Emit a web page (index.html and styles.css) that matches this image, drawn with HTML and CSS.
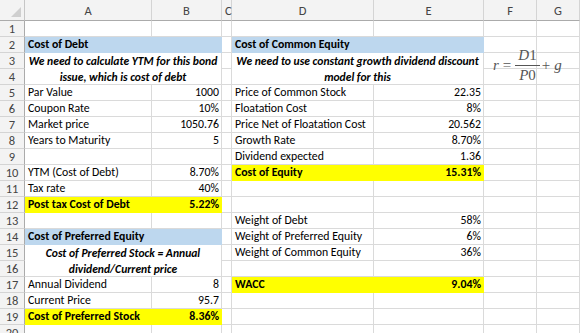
FILE: index.html
```html
<!DOCTYPE html>
<html>
<head>
<meta charset="utf-8">
<link rel="stylesheet" href="styles.css">
</head>
<body>
<div class="sheet">
  <div class="c corner"><svg width="24" height="20" viewBox="0 0 24 20"><polygon points="11,17 21,17 21,7" fill="#cfcfcf"/></svg></div>
  <div class="c hd">A</div><div class="c hd">B</div><div class="c hd">C</div><div class="c hd">D</div><div class="c hd">E</div><div class="c hd">F</div><div class="c hd">G</div>

  <div class="c rh">1</div><div class="c"></div><div class="c"></div><div class="c"></div><div class="c"></div><div class="c"></div><div class="c"></div><div class="c"></div>

  <div class="c rh">2</div><div class="c blue">Cost of Debt</div><div class="c"></div><div class="c blue">Cost of Common Equity</div><div class="c"></div><div class="c"></div>

  <div class="c rh">3</div><div class="c note">We need to calculate YTM for this bond<br>issue, which is cost of debt</div><div class="c"></div><div class="c note">We need to use constant growth dividend discount<br>model for this</div><div class="c"></div><div class="c"></div>
  <div class="c rh">4</div><div class="c"></div><div class="c"></div><div class="c"></div>

  <div class="c rh">5</div><div class="c">Par Value</div><div class="c num">1000</div><div class="c"></div><div class="c">Price of Common Stock</div><div class="c num">22.35</div><div class="c"></div><div class="c"></div>
  <div class="c rh">6</div><div class="c">Coupon Rate</div><div class="c num">10%</div><div class="c"></div><div class="c">Floatation Cost</div><div class="c num">8%</div><div class="c"></div><div class="c"></div>
  <div class="c rh">7</div><div class="c">Market price</div><div class="c num">1050.76</div><div class="c"></div><div class="c">Price Net of Floatation Cost</div><div class="c num">20.562</div><div class="c"></div><div class="c"></div>
  <div class="c rh">8</div><div class="c">Years to Maturity</div><div class="c num">5</div><div class="c"></div><div class="c">Growth Rate</div><div class="c num">8.70%</div><div class="c"></div><div class="c"></div>
  <div class="c rh">9</div><div class="c"></div><div class="c"></div><div class="c"></div><div class="c">Dividend expected</div><div class="c num">1.36</div><div class="c"></div><div class="c"></div>
  <div class="c rh">10</div><div class="c">YTM (Cost of Debt)</div><div class="c num">8.70%</div><div class="c"></div><div class="c yellow"><span>Cost of Equity</span><span>15.31%</span></div><div class="c"></div><div class="c"></div>
  <div class="c rh">11</div><div class="c">Tax rate</div><div class="c num">40%</div><div class="c"></div><div class="c"></div><div class="c"></div><div class="c"></div><div class="c"></div>
  <div class="c rh">12</div><div class="c yellow"><span>Post tax Cost of Debt</span><span>5.22%</span></div><div class="c"></div><div class="c"></div><div class="c"></div><div class="c"></div><div class="c"></div>
  <div class="c rh">13</div><div class="c"></div><div class="c"></div><div class="c"></div><div class="c">Weight of Debt</div><div class="c num">58%</div><div class="c"></div><div class="c"></div>
  <div class="c rh">14</div><div class="c blue">Cost of Preferred Equity</div><div class="c"></div><div class="c">Weight of Preferred Equity</div><div class="c num">6%</div><div class="c"></div><div class="c"></div>
  <div class="c rh">15</div><div class="c note">Cost of Preferred Stock = Annual<br>dividend/Current price</div><div class="c"></div><div class="c">Weight of Common Equity</div><div class="c num">36%</div><div class="c"></div><div class="c"></div>
  <div class="c rh">16</div><div class="c"></div><div class="c"></div><div class="c"></div><div class="c"></div><div class="c"></div>
  <div class="c rh">17</div><div class="c">Annual Dividend</div><div class="c num">8</div><div class="c"></div><div class="c yellow"><span>WACC</span><span>9.04%</span></div><div class="c"></div><div class="c"></div>
  <div class="c rh">18</div><div class="c">Current Price</div><div class="c num">95.7</div><div class="c"></div><div class="c"></div><div class="c"></div><div class="c"></div><div class="c"></div>
  <div class="c rh">19</div><div class="c yellow"><span>Cost of Preferred Stock</span><span>8.36%</span></div><div class="c"></div><div class="c"></div><div class="c"></div><div class="c"></div><div class="c"></div>
  <div class="c rh">20</div><div class="c"></div><div class="c"></div><div class="c"></div><div class="c"></div><div class="c"></div><div class="c"></div><div class="c"></div>

  <div class="formula">
    <span class="mi">r</span><span class="mo">=</span><span class="frac"><span class="numr"><span class="mi">D</span>1</span><span class="den"><span class="mi">P</span>0</span></span><span class="mo plus">+</span><span class="mi">g</span>
  </div>
</div>
</body>
</html>
```

FILE: styles.css
```css
html, body {
  margin: 0;
  padding: 0;
  background: #ffffff;
  overflow: hidden;
}

body {
  font-family: Carlito, Lato, "Liberation Sans", sans-serif;
  font-size: 11.8px;
  color: #000000;
}

.sheet {
  position: relative;
  display: grid;
  grid-template-columns: 25px 127px 70px 10px 142px 110px 53px 43px;
  grid-template-rows: 21px;
  grid-auto-rows: 16px;
  width: 580px;
}

.c {
  box-sizing: border-box;
  border-right: 1px solid #dadada;
  border-bottom: 1px solid #dadada;
  padding: 0 3px;
  line-height: 15px;
  white-space: nowrap;
  overflow: visible;
}

.corner {
  padding: 0;
  background: #f3f3f3;
  border-right-color: #c6c6c6;
  border-bottom-color: #ababab;
}

.corner svg {
  display: block;
}

.hd {
  background: #f3f3f3;
  color: #444444;
  font-size: 12.5px;
  text-align: center;
  line-height: 22px;
  border-right-color: #d4d4d4;
  border-bottom-color: #ababab;
}

.rh {
  background: #f3f3f3;
  color: #444444;
  font-size: 12.5px;
  text-align: center;
  padding: 0;
  border-right-color: #ababab;
  border-bottom-color: #d4d4d4;
}

.num {
  text-align: right;
  padding-right: 2px;
}

.blue {
  grid-column: span 2;
  background: #bdd7ee;
  border-color: #bdd7ee;
  font-weight: bold;
}

.yellow {
  grid-column: span 2;
  background: #ffff00;
  border-color: #ffff00;
  font-weight: bold;
  display: flex;
  justify-content: space-between;
  padding-right: 2px;
}

.note {
  grid-column: span 2;
  grid-row: span 2;
  font-size: 11.6px;
  font-weight: bold;
  font-style: italic;
  text-align: center;
  line-height: 16px;
  display: flex;
  align-items: center;
  justify-content: center;
}

.formula {
  position: absolute;
  left: 493px;
  top: 48px;
  display: flex;
  align-items: center;
  font-family: "Liberation Serif", "DejaVu Serif", serif;
  font-size: 15px;
  color: #555555;
}

.mi {
  font-style: italic;
}

.mo {
  margin: 0 4px 0 4px;
}

.mo.plus {
  margin: 0 4px 0 2px;
}

.frac {
  display: inline-flex;
  flex-direction: column;
  align-items: center;
  line-height: 15px;
}

.numr {
  padding: 0 3px 2px;
  border-bottom: 1px solid #555555;
}

.den {
  padding: 2px 3px 0;
}
```
